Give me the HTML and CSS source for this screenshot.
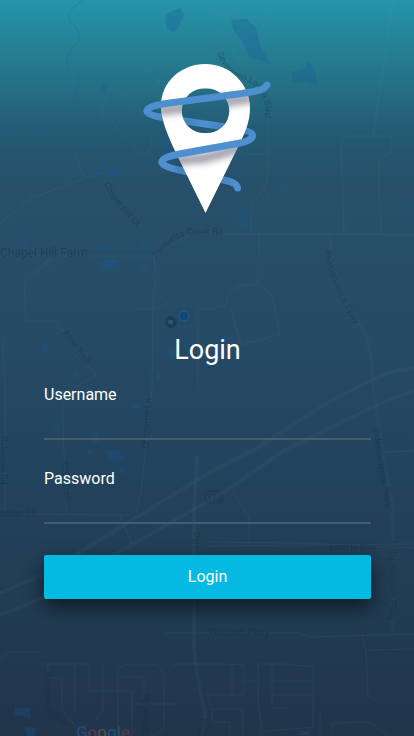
FILE: index.html
```html
<!DOCTYPE html>
<html lang="en">

<head>
    <meta charset="UTF-8" />
    <meta name="viewport" content="width=device-width, initial-scale=1.0" />
    <title>Login</title>
    <link rel="stylesheet" href="styles.css">
</head>

<body>
    <svg class="map" viewBox="0 0 414 736" preserveAspectRatio="xMidYMid slice" aria-hidden="true">
        <defs>
            <path id="chapel-ct" d="M104 184Q114 205 137 227L144 234" />
            <path id="henrietta" d="M156 258Q172 238 188 235L240 235" />
            <path id="seven-lakes" d="M217 53Q224 74 243 80Q268 88 265 116L264 150" />
            <path id="indep-1" d="M326 251Q330 288 362 336" />
            <path id="indep-2" d="M374 429Q377 465 388 520" />
            <path id="berrywood" d="M45 672L46 706Q50 719 74 736" />
        </defs>
        <!-- water -->
        <g class="water">
            <path d="M166 15l8-5 6-2 4 7-5 11-5 7-7-4-2-8z" />
            <path d="M231 20l16-1 9 9 4 16 10 21-8-4-12-3-8-17-9-12z" />
            <path d="M291 72l12-3 6-8 6 10 2 14-12-4-12 2z" />
            <path d="M101 84l6-1-1 6-4 2z" />
            <path d="M78 139l8 5-2 4-4-2z" />
            <path d="M95 169l8-5 4 2-7 7z" />
            <path d="M108 168l7-2 4 7-7 6-5-5z" />
            <path d="M18 173l5-6 2 7-4 6z" />
            <path d="M0 168l5-2-5 8z" />
            <path d="M315 164l5-6 4 7-7 2z" />
            <path d="M282 183l6 3 1 9-5-5z" />
            <path d="M239 211l4-4 4 2 1 20-8-1z" />
            <path d="M226 201l6-4 10 2v3z" />
            <path d="M162 139l6-3 3 18-3 12-4-3z" />
            <path d="M12 230l8 3-1 4z" />
            <path d="M24 241l4 3-1 4-4-3z" />
            <path d="M99 247l8-2v6h-7z" />
            <path d="M102 263l5-4 12 1-6 9-7 2-5-3z" />
            <path d="M141 236h4v14h-4z" />
            <path d="M140 266l5-1 2 6-6-1z" />
            <path d="M4 321l4 9-3-2z" />
            <path d="M41 344l6-1 1 8-6 1z" />
            <path d="M73 373l4-1v7l-4-2z" />
            <path d="M156 375l4-3 2 7-6 2z" />
            <path d="M168 350l6-1 1 8-6 2z" />
            <path d="M221 337l12-3-1 5-10 2z" />
            <path d="M132 404h10l-4 5-5-1z" />
            <path d="M52 430l8-8-2 9z" />
            <path d="M90 434l7-2 2 10-5 1z" />
            <path d="M107 450l12-1 5 12-16-1z" />
            <path d="M87 450l7 1-4 5z" />
            <path d="M120 467l4-1-2 9-3-3z" />
            <path d="M410 205l4-2v8h-4z" />
            <path d="M15 708h16l-1 12-5-4-10-1z" />
            <path d="M25 727l11 1-2 8h-7z" />
            <path d="M304 731h6l-2 4h-12z" />
        </g>
        <path class="creek" d="M82 0Q66 13 69 19Q82 34 79 40Q63 54 68 68L80 75L75 99L60 115L53 127L41 132L28 125L8 135L0 124" />
        <!-- streets -->
        <g class="street">
            <path d="M136 103L111 86L101 112L144 155Q152 150 152 138M117 124L160 82L136 63M76 155L84 178L30 199L0 224M84 178L102 173" />
            <path d="M208 14L255 17Q264 22 268 32M208 38L224 31L241 66M207 60L218 53M267 0V18" />
            <path d="M268 118V175Q267 188 252 203L251 233M264 189L269 198M240 151L249 154H268" />
            <path d="M344 232L341 145Q342 136 349 136H391V152L379 161V188L381 233M373 136L393 0" />
            <path d="M0 256H154L190 234H330L414 235" />
            <path d="M154 256L156 280L153 296L152 390L142 485L136 514" />
            <path d="M53 257L24 282L26 321H55L96 375L74 388M44 262L53 270" />
            <path d="M137 309H152L170 302M195 304L200 309H207M198 309V390" />
            <path d="M259 234L260 277L255 285Q228 282 226 305L207 310M255 285Q270 286 274 305L280 334L241 345L230 307" />
            <path d="M62 390L66 513M0 514L130 515M3 340L5 390V510" />
            <path d="M232 491L249 517V544M120 516L132 544M385 452L414 451" />
            <path d="M207 542L300 543L414 548M207 546L414 544" />
            <path d="M165 633H298L310 637L414 634M362 636L366 650L368 696L375 700M370 650L414 649" />
            <path d="M42 664H89V691M75 665V710L70 716M103 665V710L95 721M118 736V669L125 665H158L164 674V730L153 736M117 677H144V706M90 691H132V715M132 736V704H178M48 664V678H62V710L78 729" />
            <path d="M170 668L177 664H225L244 665V695H207L212 709H243V736M232 665V695M258 664V704L261 721L260 736M258 664H285L313 667V727L260 732M272 664V708H287M272 681H313M244 681H258M272 695H313M212 709V722H230V736" />
            <path d="M320 710V736M332 736V723L370 722L388 736M0 659L9 652H38" />
        </g>
        <path class="highway" d="M0 593L42 575L90 546L207 474L260 446L327 403L370 381L395 371L414 368" />
        <path class="highway" d="M0 615L42 598L100 563L224 492L285 450L373 407L414 390" />
        <path class="highway" d="M197 456L194 510L194 650L198 680L205 714L202 736" />
        <path class="avenue" d="M330 233L331 251Q334 288 357 320Q373 340 373 390L381 440L393 510V633" />
        <circle class="place" cx="171" cy="322" r="6" />
        <rect class="place-dot" x="168" y="320" width="5" height="4" rx="1" />
        <circle class="halo" cx="184" cy="316" r="10" />
        <circle class="here" cx="184" cy="316" r="5" />
        <g class="place-names">
            <text class="town" x="0" y="257">Chapel Hill Farm</text>
            <text><textPath href="#chapel-ct">Chapel Hill Ct</textPath></text>
            <text><textPath href="#henrietta">Henrietta Creek Rd</textPath></text>
            <text><textPath href="#seven-lakes">Seventeen Lakes Blvd</textPath></text>
            <text><textPath href="#indep-1">Independence Pkwy</textPath></text>
            <text><textPath href="#indep-2">Independence Pkwy</textPath></text>
            <text><textPath href="#berrywood">Berrywood Trail</textPath></text>
            <text transform="translate(62 333) rotate(53)">Allen Trail</text>
            <text transform="translate(63 461) rotate(88)">Allen Trail</text>
            <text transform="translate(148 449) rotate(-86)">Chaparral Ln</text>
            <text transform="translate(1 436) rotate(90)">Ridgetop Rd</text>
            <text x="36" y="516" text-anchor="end">Roanoke Rd</text>
            <text transform="translate(193 532) rotate(90)">Park</text>
            <text transform="translate(390 541) rotate(90)">Independence Pkwy</text>
            <text x="330" y="550">Liberty Way</text>
            <text x="209" y="635">Westport Pkwy</text>
            <text transform="translate(147 745) rotate(-88)">Ridgerow Rd</text>
            <text transform="translate(205 736) rotate(-84)">Blvd</text>
            <text x="207" y="501">170</text>
            <rect class="shield" x="205" y="491" width="18" height="12" rx="5" />
        </g>
        <text class="brand" x="76" y="738"><tspan class="g-blue">G</tspan><tspan class="g-red">o</tspan><tspan class="g-yellow">o</tspan><tspan class="g-blue">g</tspan><tspan class="g-green">l</tspan><tspan class="g-red">e</tspan></text>
    </svg>

    <main class="login">
        <svg class="logo" viewBox="143 64 130 150" role="img" aria-label="Map pin">
            <defs>
                <path id="pin" fill-rule="evenodd" d="M205.500 64C230 64 250 84 250 108C250 123 244 135 238 147L205.500 213L176 153C168 136 161 120 161 106C161 82 181 64 205.500 64ZM205.500 88.500A22.300 22.300 0 1 0 205.500 133A22.300 22.300 0 1 0 205.500 88.500Z" />
                <path id="band-top" d="M267 85C265 90 257 91 242 93.500L170 103C156 105 147 107 147 111" />
                <path id="band-low" d="M252.500 135.500C252.500 139 246 142 238 143.500L182 153.500C171 155.500 162 158 162 162" />
                <clipPath id="pin-clip">
                    <use href="#pin" clip-rule="evenodd" />
                </clipPath>
                <filter id="soft" x="-20%" y="-60%" width="140%" height="240%">
                    <feGaussianBlur stdDeviation="3" />
                </filter>
            </defs>
            <g class="band">
                <path d="M147 111C147 115 160 117 174 119.500L219 126C240 129 252.500 131 252.500 135.500" />
                <path d="M162 162C162 166 172 169 184 171L219 179C230 181 237 183 237.500 188" />
            </g>
            <g class="band-shade" filter="url(#soft)">
                <path d="M161 117L172 120M184 122L194 122M215 127L250 132M176 169L188 172M222 180L228 182" />
            </g>
            <use class="pin" href="#pin" />
            <g clip-path="url(#pin-clip)">
                <g class="pin-shade" filter="url(#soft)">
                    <path d="M158 111L200 106L252 98M174 161L205 158L244 147" />
                </g>
            </g>
            <g class="band">
                <use href="#band-top" />
                <use href="#band-low" />
            </g>
        </svg>

        <h1>Login</h1>

        <form id="loginForm">
            <div class="field">
                <label for="username">Username</label>
                <input type="text" id="username" name="username" autocomplete="username">
            </div>
            <div class="field">
                <label for="password">Password</label>
                <input type="password" id="password" name="password" autocomplete="current-password">
            </div>
            <button type="submit">Login</button>
        </form>
    </main>
</body>

</html>
```
FILE: styles.css
```css
:root {
    --accent: #04bae3;
    --band: #4d8fcf;
    --text-color: #ffffff;
    --line-color: #485c70;
}

* {
    box-sizing: border-box;
    margin: 0;
    padding: 0;
}

body {
    position: relative;
    min-height: 100vh;
    font-family: Roboto, "Liberation Sans", sans-serif;
    font-size: 16px;
    color: var(--text-color);
    background: linear-gradient(#2594aa 0%, #257589 10%, #245a73 18%, #27506a 25%, #274e69 35%, #254a65 48%, #23455f 60%, #213d54 80%, #21354b 100%);
}

/* map backdrop */
.map {
    position: absolute;
    top: 0;
    left: 0;
    width: 100%;
    height: 100%;
}

.water {
    fill: #17599a;
    opacity: 0.28;
}

.creek,
.street,
.avenue,
.highway {
    fill: none;
    stroke: #7fa3b0;
    opacity: 0.08;
}

.creek {
    stroke: #0a659b;
    opacity: 0.25;
}

.avenue {
    stroke-width: 4;
    opacity: 0.04;
}

.highway {
    stroke-width: 4;
    opacity: 0.06;
}

.place {
    fill: #183f58;
}

.place-dot {
    fill: #2a5971;
}

.halo {
    fill: #14477b;
    opacity: 0.15;
}

.here {
    fill: #13467a;
    stroke: #2b5f84;
}

.place-names {
    font-size: 9px;
    fill: #10293b;
    opacity: 0.35;
}

.town {
    font-size: 12px;
}

.shield {
    fill: none;
    stroke: #10293b;
}

.brand {
    font-size: 17px;
    font-weight: 500;
    opacity: 0.4;
}

.g-blue {
    fill: #246bc0;
}

.g-red {
    fill: #a5413f;
}

.g-yellow {
    fill: #8d7b32;
}

.g-green {
    fill: #23844f;
}

/* login panel */
.login {
    position: relative;
    max-width: 480px;
    margin: 0 auto;
    padding: 64px 43px 44px 44px;
}

.logo {
    display: block;
    width: 130px;
    height: 150px;
    margin: 0 auto;
}

.pin {
    fill: #ffffff;
}

.band {
    fill: none;
    stroke: var(--band);
    stroke-width: 7;
    stroke-linecap: round;
    stroke-linejoin: round;
}

.band-shade {
    fill: none;
    stroke: #1c416d;
    stroke-width: 4;
    opacity: 0.4;
}

.pin-shade {
    fill: none;
    stroke: #4c4660;
    stroke-width: 10;
    opacity: 0.5;
}

h1 {
    margin: 118px 0 16px;
    font-size: 27px;
    font-weight: 400;
    line-height: 36px;
    text-align: center;
}

.field {
    margin-bottom: 28px;
}

label {
    display: block;
    line-height: 22px;
}

input {
    display: block;
    width: 100%;
    height: 34px;
    border: none;
    border-bottom: 2px solid var(--line-color);
    background: transparent;
    color: inherit;
    font: inherit;
    outline: none;
}

input:focus {
    border-bottom-color: var(--accent);
}

button {
    display: block;
    width: 100%;
    height: 44px;
    margin-top: 31px;
    padding-bottom: 2px;
    border: none;
    border-radius: 2px;
    background-color: var(--accent);
    box-shadow: 0 8px 20px rgba(0, 0, 0, 0.6);
    color: var(--text-color);
    font: inherit;
    cursor: pointer;
}
```
